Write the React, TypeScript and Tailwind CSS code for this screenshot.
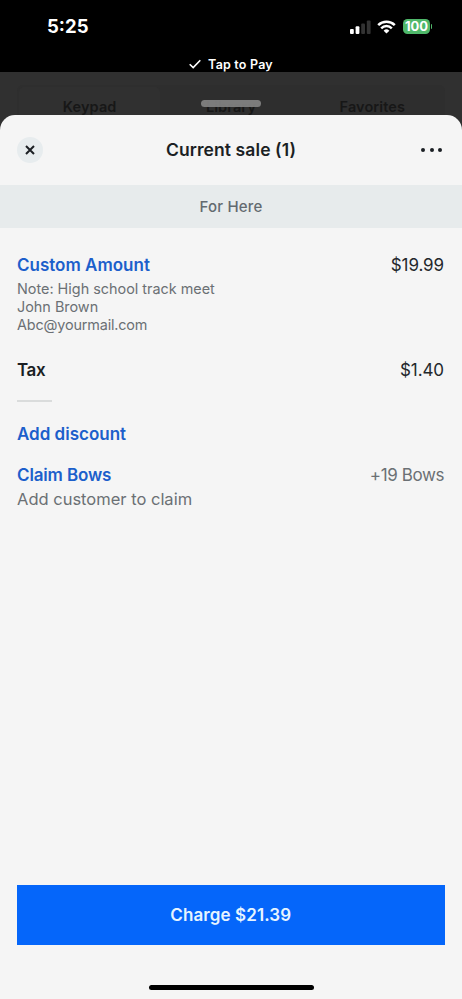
import type { ReactNode } from "react";

function StatusBar() {
  return (
    <header className="h-[72px] bg-black text-white">
      <div className="flex h-[53px] items-center justify-between pl-[47px] pr-[30px]">
        <span className="text-[18.5px] font-bold">5:25</span>
        <div className="flex items-center">
          <svg width="22" height="14" viewBox="0 0 22 14">
            <rect x="0" y="9" width="3.8" height="5" rx="1" fill="#fff" />
            <rect x="5.6" y="6.3" width="3.8" height="7.7" rx="1" fill="#fff" />
            <rect x="11.2" y="3.5" width="3.8" height="10.5" rx="1" fill="#333" />
            <rect x="16.8" y="0.5" width="3.8" height="13.5" rx="1" fill="#333" />
          </svg>
          <svg className="ml-[5px]" width="19" height="14" viewBox="0 0 19 14" fill="none" stroke="#fff" strokeWidth="2.5">
            <path d="M1.2 5.1a11.8 11.8 0 0 1 16.6 0" />
            <path d="M4.2 8.3a7.5 7.5 0 0 1 10.6 0" />
            <path d="M9.5 13.6 6.6 10.7a4.1 4.1 0 0 1 5.8 0Z" fill="#fff" stroke="none" />
          </svg>
          <div className="ml-[7px] flex h-[15px] w-[27px] items-center justify-center rounded-[4.5px] bg-[#4fb86a] text-[13px] font-bold leading-none">
            100
          </div>
          <div className="ml-px h-[5px] w-px rounded-r bg-[#4fb86a]" />
        </div>
      </div>
      <div className="flex h-[23px] items-center justify-center gap-[7px] text-[12.5px] font-semibold tracking-[0.2px]">
        <svg className="-mt-[2px]" width="12" height="10" viewBox="0 0 12 10" fill="none" stroke="#fff" strokeWidth="1.6">
          <path d="M0.7 5.2 4.2 8.6 11.3 1.3" />
        </svg>
        <span className="pt-px">Tap to Pay</span>
      </div>
    </header>
  );
}

// Tabs of the checkout screen, dimmed behind the sheet
function DimmedTabs() {
  return (
    <div className="relative h-[43px] overflow-hidden bg-[#303030] px-[17px] pt-[13px]">
      <div className="grid h-[40px] grid-cols-3 rounded-[6px] bg-[#2e2e2e] p-[2px] text-center text-[14.5px] font-semibold leading-[39px] tracking-[0.1px] text-[#171717]">
        <span className="rounded-[5px] bg-[#303030]">Keypad</span>
        <span>Library</span>
        <span>Favorites</span>
      </div>
      <div className="absolute left-[201px] top-[28px] h-[7px] w-[60px] rounded-full bg-[#858585]/90" />
    </div>
  );
}

function Row({ label, value }: { label: ReactNode; value?: ReactNode }) {
  return (
    <div className="flex h-[24px] items-center justify-between pt-[3px] text-[17px]">
      <span className="font-semibold">{label}</span>
      {value}
    </div>
  );
}

export default function App() {
  return (
    <div className="flex h-[999px] w-[462px] flex-col overflow-hidden bg-[#303030] font-['Inter',sans-serif] text-[#1b1f24]">
      <StatusBar />
      <DimmedTabs />
      <main className="flex flex-1 flex-col rounded-t-[15px] bg-[#f5f5f5]">
        <div className="flex h-[70px] items-center justify-between px-[17px]">
          <button className="flex size-[26px] items-center justify-center rounded-full bg-[#e7ecee]" aria-label="Close">
            <svg width="10" height="10" viewBox="0 0 10 10" stroke="#1b1f24" strokeWidth="2">
              <path d="M1 1 9 9M9 1 1 9" />
            </svg>
          </button>
          <h1 className="text-[17.5px] font-semibold tracking-[0.1px]">Current sale (1)</h1>
          <button className="flex w-[26px] justify-center gap-[4.5px]" aria-label="More">
            <span className="size-[4px] shrink-0 rounded-full bg-[#1b1f24]" />
            <span className="size-[4px] shrink-0 rounded-full bg-[#1b1f24]" />
            <span className="size-[4px] shrink-0 rounded-full bg-[#1b1f24]" />
          </button>
        </div>
        <div className="flex h-[42.5px] items-center justify-center bg-[#e7ebec] pt-px text-[15px] font-medium tracking-[0.2px] text-[#636a70]">
          For Here
        </div>
        <div className="flex-1 pl-[17px] pr-[18px] pt-[24.5px]">
          <div className="text-[#1c5fcb]">
            <Row label="Custom Amount" value={<span className="tracking-[-0.1px] text-[#24282c]">$19.99</span>} />
          </div>
          <div className="pt-[4px] text-[14.4px] leading-[17.8px] text-[#6b7074]">
            <p>Note: High school track meet</p>
            <p>John Brown</p>
            <p className="tracking-[-0.15px]">Abc@yourmail.com</p>
          </div>
          <div className="mt-[23.6px]">
            <Row
              label={<span className="tracking-[-0.4px]">Tax</span>}
              value={<span className="tracking-[-0.1px] text-[#24282c]">$1.40</span>}
            />
          </div>
          <div className="mt-[19px] h-[2px] w-[35px] bg-[#dadcdc]" />
          <div className="mt-[19px] text-[#1c5fcb]">
            <Row label="Add discount" />
          </div>
          <div className="mt-[17px] text-[#1c5fcb]">
            <Row
              label={<span className="tracking-[-0.15px]">Claim Bows</span>}
              value={<span className="tracking-[-0.4px] text-[#6b7074]">+19 Bows</span>}
            />
          </div>
          <p className="text-[16.5px] leading-[26px] text-[#6b7074]">Add customer to claim</p>
        </div>
        <button className="ml-[17px] mr-[17.5px] h-[60px] bg-[#0566fa] pt-[3px] text-[17px] font-semibold tracking-[0.1px] text-[#e6f4ff]">
          Charge $21.39
        </button>
        <div className="flex h-[54.5px] justify-center pt-[40.5px]">
          <div className="h-[5px] w-[165px] rounded-full bg-black" />
        </div>
      </main>
    </div>
  );
}
